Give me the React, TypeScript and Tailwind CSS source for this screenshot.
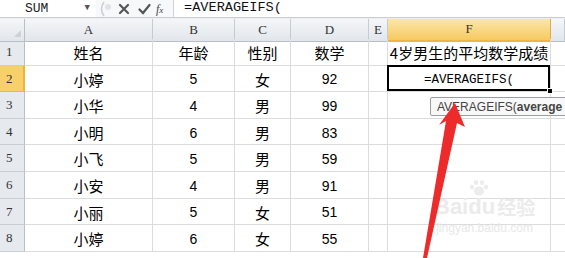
const cjk = "[font-family:'Noto_Sans_CJK_SC','Liberation_Sans',sans-serif]";
const num = "[font-family:'Liberation_Sans','Noto_Sans_CJK_SC',sans-serif]";
const mono = "[font-family:'Liberation_Mono','DejaVu_Sans_Mono',monospace]";
const serif = "[font-family:'Liberation_Serif',serif]";

const cols = "grid grid-cols-[25px_128px_82px_56px_78px_19px_163px_1fr]";

type Row = { n: number; name: string; age: string; sex: string; score: string; f?: string };

const rows: Row[] = [
  { n: 1, name: "姓名", age: "年龄", sex: "性别", score: "数学", f: "4岁男生的平均数学成绩" },
  { n: 2, name: "小婷", age: "5", sex: "女", score: "92" },
  { n: 3, name: "小华", age: "4", sex: "男", score: "99" },
  { n: 4, name: "小明", age: "6", sex: "男", score: "83" },
  { n: 5, name: "小飞", age: "5", sex: "男", score: "59" },
  { n: 6, name: "小安", age: "4", sex: "男", score: "91" },
  { n: 7, name: "小丽", age: "5", sex: "女", score: "51" },
  { n: 8, name: "小婷", age: "6", sex: "女", score: "55" },
];

const isNum = (s: string) => /^\d+$/.test(s);

const Cell = ({ text }: { text: string }) => (
  <div
    className={`flex items-center justify-center pt-[3px] border-r border-b border-[#dadcdd] text-black ${
      isNum(text) ? num + " text-[14px]" : cjk + " text-[15px]"
    }`}
  >
    {text}
  </div>
);

const ColHead = ({ label, active }: { label: string; active?: boolean }) => (
  <div
    className={`flex items-end justify-center pb-[1px] border-r text-[13px] text-[#333] ${serif} ${
      active
        ? "bg-gradient-to-b from-[#fbe7a9] to-[#f6c95f] border-[#e3a94c] border-b-2 border-b-[#f1b44a]"
        : "bg-gradient-to-b from-[#f4f6f8] to-[#e2e6eb] border-[#c5cbd3] border-b border-b-[#b7bfc9]"
    }`}
  >
    {label}
  </div>
);

const App = () => {
  return (
    <div className="relative w-[565px] h-[258px] overflow-hidden bg-white">
      {/* formula bar */}
      <div className="flex h-[18px] bg-white border-b border-[#c9ced5]">
        <div className={`w-[96px] flex items-center pl-[25px] text-[13px] text-[#222] ${mono}`}>
          <span>SUM</span>
          <span className="ml-auto mr-[6px] text-[9px] text-[#555]">▼</span>
        </div>
        <div className="w-[77px] flex items-center bg-[#f7f8f9]">
          <svg width="14" height="16" viewBox="0 0 14 16" className="ml-[2px]">
            <path d="M6 1 Q1 8 6 15" stroke="#c9cdd2" strokeWidth="1.5" fill="none" />
            <circle cx="10" cy="6" r="3" fill="#dfe2e6" />
          </svg>
          <svg width="12" height="12" viewBox="0 0 12 12" className="ml-[6px]">
            <path d="M2 2 L10 10 M10 2 L2 10" stroke="#555" strokeWidth="2.2" strokeLinecap="round" />
          </svg>
          <svg width="13" height="12" viewBox="0 0 13 12" className="ml-[8px]">
            <path d="M1.5 6.5 L5 10 L11.5 2" stroke="#555" strokeWidth="2.2" fill="none" strokeLinecap="round" />
          </svg>
          <span className={`ml-[5px] italic text-[12px] text-[#444] ${serif}`}>
            f<span className="text-[9px]">x</span>
          </span>
        </div>
        <div className={`flex-1 flex items-center border-l border-[#d0d4da] pl-[10px] text-[13.6px] text-[#111] ${mono}`}>
          =AVERAGEIFS(
        </div>
      </div>
      <div className="h-[1px] bg-[#eceef1]" />

      {/* column headers */}
      <div className={`${cols} h-[20px]`}>
        <div className="relative bg-gradient-to-b from-[#f4f6f8] to-[#e2e6eb] border-r border-b border-[#b7bfc9]">
          <div className="absolute right-[3px] bottom-[4px] w-0 h-0 border-l-[7px] border-l-transparent border-b-[7px] border-b-[#cdd2d8]" />
        </div>
        <ColHead label="A" />
        <ColHead label="B" />
        <ColHead label="C" />
        <ColHead label="D" />
        <ColHead label="E" />
        <ColHead label="F" active />
        <ColHead label="" />
      </div>

      {/* rows */}
      {rows.map((r) => (
        <div key={r.n} className={`${cols} h-[26.6px]`}>
          <div
            className={`flex items-end pl-[6px] pb-[3px] text-[13px] text-[#333] ${serif} border-b ${
              r.n === 2
                ? "bg-[#f7cf6b] border-r-2 border-r-[#f0b040] border-b-[#e5b65a]"
                : "bg-[#e6e9ee] border-r border-r-[#b7bfc9] border-b-[#c9ced6]"
            }`}
          >
            {r.n}
          </div>
          <Cell text={r.name} />
          <Cell text={r.age} />
          <Cell text={r.sex} />
          <Cell text={r.score} />
          <Cell text="" />
          {r.n === 2 ? (
            <div className="relative flex items-center justify-center pt-[3px] border-r border-b border-[#dadcdd]">
              <span className={`text-[12.5px] text-black ${mono}`}>=AVERAGEIFS(</span>
              <div className="absolute -left-[1px] -top-[1px] right-0 bottom-0 border-2 border-black" />
              <div className="absolute -right-[3px] -bottom-[3px] w-[6px] h-[6px] bg-black border border-white" />
            </div>
          ) : (
            <Cell text={r.f ?? ""} />
          )}
          <div className="border-b border-[#dadcdd]" />
        </div>
      ))}

      {/* function tooltip */}
      <div
        className={`absolute left-[430px] top-[97px] h-[19px] w-[150px] flex items-center pl-[6px] rounded-[2px] border border-[#9a9ea4] bg-[#f8f8f8] text-[12px] text-[#444] whitespace-nowrap ${num}`}
      >
        AVERAGEIFS(<span className="font-bold">average</span>
      </div>

      {/* watermark */}
      <div className="absolute left-[434px] top-[196px] flex flex-col items-center select-none">
        <div className={`flex items-end text-[22px] leading-[22px] font-bold text-[#ebebeb] ${num}`}>
          <span>Bai</span>
          <span className="relative">
            du
            <svg width="22" height="18" viewBox="0 0 22 18" className="absolute -top-[17px] left-[0px]">
              <ellipse cx="11" cy="12" rx="5" ry="4.5" fill="#ececec" />
              <ellipse cx="4" cy="8" rx="2.2" ry="2.6" fill="#ececec" />
              <ellipse cx="8" cy="3.5" rx="2.2" ry="2.6" fill="#ececec" />
              <ellipse cx="14" cy="3.5" rx="2.2" ry="2.6" fill="#ececec" />
              <ellipse cx="18" cy="8" rx="2.2" ry="2.6" fill="#ececec" />
            </svg>
          </span>
          <span className={`ml-[2px] text-[19px] ${cjk}`}>经验</span>
        </div>
        <div className={`mt-[4px] text-[12px] leading-[12px] text-[#e8e8e8] ${num}`}>jingyan.baidu.com</div>
      </div>

      {/* red arrow */}
      <svg className="absolute left-0 top-0 pointer-events-none" width="565" height="258" viewBox="0 0 565 258">
        <polygon
          points="455,103 465,127 457,123 427,258 423,258 446,121 439,125"
          fill="#ee2b2b"
        />
      </svg>
    </div>
  );
};

export default App;
